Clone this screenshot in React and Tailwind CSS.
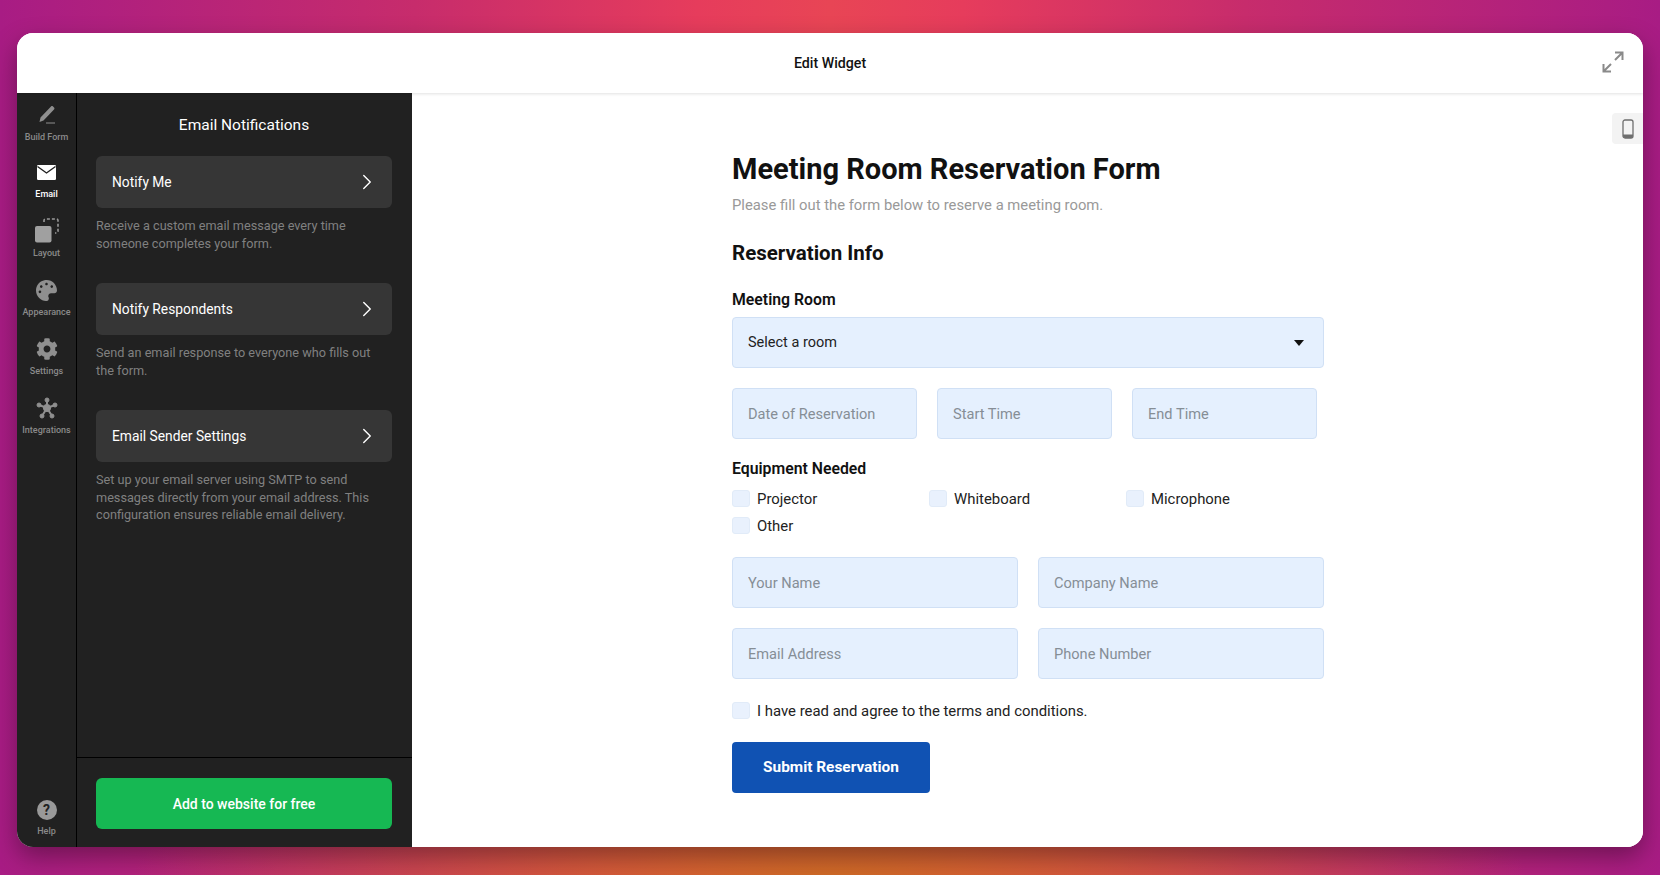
import { ChevronRight } from 'lucide-react';
import { FaPalette, FaCog } from 'react-icons/fa';

const font = "font-['Roboto','Noto_Sans',sans-serif]";

const notifications = [
  { label: 'Notify Me', desc: ['Receive a custom email message every time', 'someone completes your form.'] },
  { label: 'Notify Respondents', desc: ['Send an email response to everyone who fills out', 'the form.'] },
  { label: 'Email Sender Settings', desc: ['Set up your email server using SMTP to send', 'messages directly from your email address. This', 'configuration ensures reliable email delivery.'] },
];

function PencilIcon() {
  return (
    <svg width="22" height="22" viewBox="0 0 22 22" fill="none">
      <path d="M3.5 19 4.5 14.5 15 3.5c.6-.6 1.4-.6 2 0l1 1c.6.6.6 1.4 0 2L7.5 17.5z" fill="#8f8f8f" />
      <path d="M10 20h9" stroke="#8f8f8f" strokeWidth="1" />
    </svg>
  );
}

function MailIcon() {
  return (
    <svg width="19" height="15" viewBox="0 0 19 15">
      <rect width="19" height="15" rx="1.2" fill="#ffffff" />
      <path d="M.5 1.5 9.5 8l9-6.5" fill="none" stroke="#212121" strokeWidth="1.4" />
    </svg>
  );
}

function LayoutIcon() {
  return (
    <svg width="26" height="26" viewBox="0 0 26 26" fill="none">
      <path d="M10 4V2.5a1.5 1.5 0 0 1 1.5-1.5h11A1.5 1.5 0 0 1 24 2.5v11a1.5 1.5 0 0 1-1.5 1.5H21" stroke="#999999" strokeWidth="1.6" strokeDasharray="3 2" />
      <rect x="1" y="8" width="16.5" height="16.5" rx="2" fill="#a0a0a0" />
    </svg>
  );
}

function IntegrationsIcon() {
  return (
    <svg width="22" height="22" viewBox="0 0 22 22" fill="#8f8f8f" stroke="#8f8f8f">
      <path d="M11 11V3M11 11 3 8M11 11l8-3M11 11 6 19M11 11l5 8" strokeWidth="2" />
      <circle cx="11" cy="11" r="3.6" />
      <circle cx="11" cy="3" r="2" />
      <circle cx="3" cy="8" r="2" />
      <circle cx="19" cy="8" r="2" />
      <circle cx="6" cy="19" r="2" />
      <circle cx="16" cy="19" r="2" />
    </svg>
  );
}

function HelpIcon() {
  return (
    <div className="flex h-5 w-5 items-center justify-center rounded-full bg-[#999999] text-[14px] font-bold leading-none text-[#222222]">?</div>
  );
}

const railItems = [
  { label: 'Build Form', icon: <PencilIcon />, first: true },
  { label: 'Email', icon: <MailIcon />, active: true },
  { label: 'Layout', icon: <LayoutIcon /> },
  { label: 'Appearance', icon: <FaPalette size={21} color="#8f8f8f" /> },
  { label: 'Settings', icon: <FaCog size={22} color="#8f8f8f" /> },
  { label: 'Integrations', icon: <IntegrationsIcon /> },
];

function RailItem({ label, icon, active, first }) {
  return (
    <div className={`flex flex-col items-center ${first ? 'h-[58px]' : 'h-[59px]'}`}>
      <div className="flex h-[30px] items-center justify-center">{icon}</div>
      <span className={`text-[9px] font-medium leading-[14px] ${first ? 'mt-[1px]' : ''} ${active ? 'text-white' : 'text-[#8a8a8a]'}`}>{label}</span>
    </div>
  );
}

function TextField({ placeholder, className = '' }) {
  return (
    <input
      placeholder={placeholder}
      className={`h-[51px] rounded border border-[#d0e0f5] bg-[#e5f0fe] px-[15px] text-[14.6px] outline-none placeholder:text-[#868e96] ${className}`}
    />
  );
}

function Check({ label }) {
  return (
    <label className="flex h-[17px] items-center gap-[7px] text-[14.9px] text-[#222222]">
      <span className="h-[17px] w-[18px] shrink-0 rounded-[3px] border border-[#e1ebf8] bg-[#e9f1fd]" />
      <span className="pt-[1px]">{label}</span>
    </label>
  );
}

export default function App() {
  return (
    <div className={`h-[875px] w-[1660px] overflow-hidden bg-[radial-gradient(ellipse_42%_14%_at_50%_100%,#cf6a26_0%,#cf6a2600_100%),linear-gradient(90deg,#a81c84_0%,#c72c6c_25%,#e63c5c_42%,#e84555_50%,#e63c5c_58%,#c72c6c_75%,#a81c84_100%)] px-[17px] pb-[28px] pt-[33px] ${font}`}>
      <div className="flex h-full flex-col overflow-hidden rounded-2xl bg-white shadow-[0_10px_25px_rgba(0,0,0,0.35)]">
        {/* Header */}
        <header className="relative z-10 flex h-[60px] shrink-0 items-center justify-center bg-white pt-[1px] shadow-[0_1px_3px_rgba(0,0,0,0.12)]">
          <span className="text-[14.2px] font-medium text-[#111111]">Edit Widget</span>
          <svg className="absolute right-[19px] top-[18px]" width="22" height="22" viewBox="0 0 22 22" fill="none" stroke="#8a8a8a" strokeWidth="2">
            <path d="M13 1.5h7.5V9M20.5 1.5 13 9M9 13l-7.5 7.5M1.5 13v7.5H9" />
          </svg>
        </header>

        <div className="flex min-h-0 flex-1">
          {/* Icon rail */}
          <nav className="flex w-[60px] shrink-0 flex-col border-r border-black bg-[#212121] pt-[6px]">
            {railItems.map((item) => (
              <RailItem key={item.label} {...item} />
            ))}
            <div className="mt-auto flex flex-col items-center pb-[9px]">
              <HelpIcon />
              <span className="mt-[4px] text-[9px] font-medium leading-[14px] text-[#8a8a8a]">Help</span>
            </div>
          </nav>

          {/* Settings panel */}
          <aside className="flex w-[335px] shrink-0 flex-col bg-[#212121]">
            <div className="flex-1 pl-[19px] pr-[20px]">
              <h2 className="mt-[21px] text-center text-[15.5px] font-normal leading-[22px] text-white">Email Notifications</h2>
              <div className="mt-[20px] flex flex-col">
                {notifications.map(({ label, desc }) => (
                  <div key={label} className="h-[127px]">
                    <button className="flex h-[52px] w-full items-center justify-between rounded-md bg-[#363636] pl-[16px] pr-[12px] text-[13.8px] font-normal text-white">
                      <span className="pt-[1px]">{label}</span>
                      <ChevronRight size={26} strokeWidth={1.3} color="#ffffff" />
                    </button>
                    <p className="mt-[9px] text-[12.7px] leading-[17.5px] text-[#808080]">
                      {desc.map((line) => (
                        <span key={line} className="block whitespace-nowrap">{line}</span>
                      ))}
                    </p>
                  </div>
                ))}
              </div>
            </div>
            <div className="border-t border-black pb-[18px] pl-[19px] pr-[20px] pt-[20px]">
              <button className="h-[51px] w-full rounded-md bg-[#16b853] pt-[2px] text-[14px] font-medium text-white">Add to website for free</button>
            </div>
          </aside>

          {/* Form preview */}
          <main className="relative flex-1 bg-white pl-[320px] pt-[58px]">
            <div className="absolute right-0 top-[20px] flex h-[31px] w-[31px] items-center justify-center rounded-l bg-[#f3f3f3]">
              <svg width="12" height="20" viewBox="0 0 12 20" fill="none">
                <rect x="1" y="1" width="10" height="18" rx="2" stroke="#6e6e6e" strokeWidth="1.3" />
                <path d="M1 15.5h10V17a2 2 0 0 1-2 2H3a2 2 0 0 1-2-2z" fill="#6e6e6e" />
              </svg>
            </div>
            <div className="w-[592px]">
              <h1 className="text-[29px] font-bold leading-[36px] text-[#111111]">Meeting Room Reservation Form</h1>
              <p className="mt-[8px] text-[14.8px] leading-[20px] text-[#999999]">Please fill out the form below to reserve a meeting room.</p>
              <h2 className="mt-[24px] text-[20.5px] font-bold leading-[28px] text-[#111111]">Reservation Info</h2>
              <div className="mt-[23px] text-[15.8px] font-semibold leading-[20px] text-[#111111]">Meeting Room</div>
              <div className="mt-[7px] flex h-[51px] items-center justify-between rounded border border-[#d0e0f5] bg-[#e5f0fe] pl-[15px] pr-[19px] text-[14.5px] text-[#222222]">
                <span className="pt-[1px]">Select a room</span>
                <svg width="10" height="6" viewBox="0 0 10 6"><path d="M0 0h10L5 6z" fill="#111111" /></svg>
              </div>
              <div className="mt-[20px] flex gap-[20px]">
                <TextField placeholder="Date of Reservation" className="w-[185px]" />
                <TextField placeholder="Start Time" className="w-[175px]" />
                <TextField placeholder="End Time" className="w-[185px]" />
              </div>
              <div className="mt-[20px] text-[15.8px] font-semibold leading-[20px] text-[#111111]">Equipment Needed</div>
              <div className="mt-[11px] grid grid-cols-[197px_197px_197px] gap-y-[10px]">
                <Check label="Projector" />
                <Check label="Whiteboard" />
                <Check label="Microphone" />
                <Check label="Other" />
              </div>
              <div className="mt-[23px] grid grid-cols-2 gap-x-[20px] gap-y-[20px]">
                <TextField placeholder="Your Name" className="w-full" />
                <TextField placeholder="Company Name" className="w-full" />
                <TextField placeholder="Email Address" className="w-full" />
                <TextField placeholder="Phone Number" className="w-full" />
              </div>
              <div className="mt-[23px]">
                <Check label="I have read and agree to the terms and conditions." />
              </div>
              <button className="mt-[23px] h-[51px] w-[198px] rounded bg-[#1052b3] pt-[1px] text-[15.4px] font-bold text-white">Submit Reservation</button>
            </div>
          </main>
        </div>
      </div>
    </div>
  );
}
